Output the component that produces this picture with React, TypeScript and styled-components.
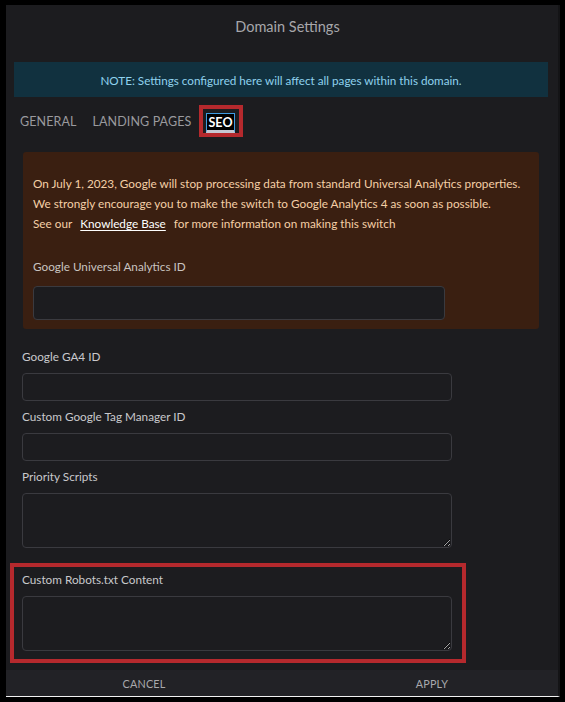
import React from 'react';
import styled, { createGlobalStyle } from 'styled-components';

const GlobalStyle = createGlobalStyle`
  html, body {
    margin: 0;
    padding: 0;
    background: #000;
  }
  body {
    font-family: Lato, "Open Sans", "Noto Sans", sans-serif;
    -webkit-font-smoothing: antialiased;
  }
  * {
    box-sizing: border-box;
  }
`;

const Screen = styled.div`
  width: 565px;
  height: 702px;
  padding: 5px 0 0 6px;
  background: #000;
`;

const Dialog = styled.div`
  width: 554px;
  height: 692px;
  display: flex;
  flex-direction: column;
  background: #1c1c1f;
  border-bottom: 1px solid #f2f2f2;
  border-right: 2px solid #141416;

  & > * {
    flex-shrink: 0;
  }
`;

const Title = styled.h2`
  margin: 0;
  padding: 12px 0 25px 11px;
  font-size: 14.5px;
  line-height: 20px;
  font-weight: 400;
  text-align: center;
  color: #a7a7ab;
`;

const Note = styled.div`
  margin: 0 10px 0 8px;
  height: 35px;
  display: flex;
  align-items: center;
  justify-content: center;
  background: #11313f;
  color: #8fd2ee;
  font-size: 11.7px;
  white-space: nowrap;
`;

const Tabs = styled.nav`
  display: flex;
  align-items: center;
  gap: 16px;
  margin: 8px 0 0 14px;
  height: 32px;
`;

const Tab = styled.span<{ $active?: boolean }>`
  font-size: 12.5px;
  letter-spacing: 0.1px;
  text-transform: uppercase;
  color: ${p => (p.$active ? '#fff' : '#9a9a9e')};
  ${p =>
    p.$active &&
    `
    display: block;
    background: #000;
    border: 1px solid #3e9be2;
    border-bottom: 3px solid #c6c8d2;
    padding: 1px 1px 0;
    line-height: 15px;
    font-weight: 700;
  `}
`;

const Highlight = styled.div<{ $inline?: boolean }>`
  border: 4px solid #b5292d;
  ${p =>
    p.$inline
      ? `
    margin-left: -8px;
    padding: 4px 4px 0 3px;
    align-self: stretch;
  `
      : `
    margin: 15px 0 0 -12px;
    width: 456px;
    padding: 5px 10px 8px 8px;
  `}
`;

const Body = styled.div`
  flex: 1 0 auto;
  display: flex;
  flex-direction: column;
  padding: 15px 19px 0 16px;
`;

const Warning = styled.div`
  margin-left: 1px;
  padding: 22px 10px 9px;
  border-radius: 3px;
  background: #3a1f11;
  color: #f5cfa6;
  font-size: 11.75px;
`;

const WarningLine = styled.p`
  margin: 0;
  line-height: 20px;
  white-space: nowrap;
`;

const KbLink = styled.a`
  display: inline-block;
  margin: 0 8px;
  color: #fff;
  text-decoration: underline;
  text-underline-offset: 2px;
`;

const Field = styled.div<{ $nested?: boolean }>`
  display: flex;
  flex-direction: column;
  margin-top: ${p => (p.$nested ? '25px' : '0')};
`;

const Label = styled.label<{ $nested?: boolean }>`
  display: block;
  font-size: 11.75px;
  line-height: 16px;
  color: ${p => (p.$nested ? '#c9c4c0' : '#c9c9cc')};
  margin-bottom: ${p => (p.$nested ? '11px' : '8px')};
`;

const TextInput = styled.input<{ $tall?: boolean }>`
  width: ${p => (p.$tall ? '412px' : '430px')};
  height: ${p => (p.$tall ? '34px' : '28px')};
  margin-bottom: ${p => (p.$tall ? '0' : '8px')};
  background: #1c1c1f;
  border: 1px solid #3a3a3f;
  border-radius: 4px;
  color: #ddd;
  outline: none;
`;

const TextArea = styled.textarea`
  width: 430px;
  height: 55px;
  resize: vertical;
  color-scheme: dark;
  background: #1c1c1f;
  border: 1px solid #3a3a3f;
  border-radius: 4px;
  color: #ddd;
  outline: none;
  display: block;
`;

const Fields = styled.div`
  margin-top: 20px;
  display: flex;
  flex-direction: column;
`;

const Footer = styled.div`
  display: grid;
  grid-template-columns: 1fr 1fr;
  height: 26px;
  margin-top: auto;
  background: #222226;
`;

const FooterButton = styled.button<{ $shift?: number }>`
  background: none;
  border: none;
  padding: 0 0 0 ${p => p.$shift ?? 0}px;
  color: #a9a9ad;
  font-family: inherit;
  font-size: 10.8px;
  letter-spacing: 0.2px;
  text-transform: uppercase;
  cursor: pointer;
`;

export default function App() {
  return (
    <>
      <GlobalStyle />
      <Screen>
        <Dialog>
          <Title>Domain Settings</Title>
          <Note>NOTE: Settings configured here will affect all pages within this domain.</Note>
          <Tabs>
            <Tab>General</Tab>
            <Tab>Landing Pages</Tab>
            <Highlight $inline>
              <Tab $active>SEO</Tab>
            </Highlight>
          </Tabs>
          <Body>
            <Warning>
              <WarningLine>
                On July 1, 2023, Google will stop processing data from standard Universal Analytics properties.
              </WarningLine>
              <WarningLine>
                We strongly encourage you to make the switch to Google Analytics 4 as soon as possible.
              </WarningLine>
              <WarningLine>
                See our<KbLink href="#">Knowledge Base</KbLink>for more information on making this switch
              </WarningLine>
              <Field $nested>
                <Label $nested>Google Universal Analytics ID</Label>
                <TextInput $tall />
              </Field>
            </Warning>
            <Fields>
              <Label>Google GA4 ID</Label>
              <TextInput />
              <Label>Custom Google Tag Manager ID</Label>
              <TextInput />
              <Label>Priority Scripts</Label>
              <TextArea />
            </Fields>
            <Highlight>
              <Label>Custom Robots.txt Content</Label>
              <TextArea />
            </Highlight>
          </Body>
          <Footer>
            <FooterButton>Cancel</FooterButton>
            <FooterButton $shift={24}>Apply</FooterButton>
          </Footer>
        </Dialog>
      </Screen>
    </>
  );
}
